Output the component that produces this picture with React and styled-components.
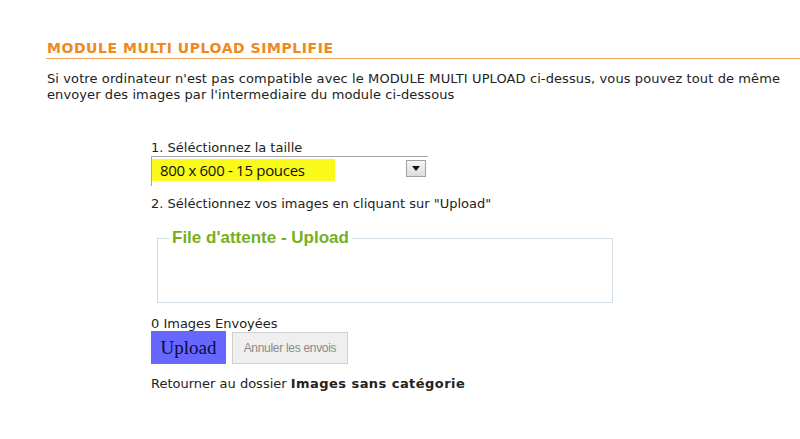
import React from 'react';
import styled, { createGlobalStyle } from 'styled-components';

const GlobalStyle = createGlobalStyle`
  html, body {
    margin: 0;
    padding: 0;
    background: #ffffff;
  }
  body {
    font-family: "DejaVu Sans", Verdana, sans-serif;
    font-size: 13px;
    color: #222;
  }
`;

const Page = styled.div`
  width: 800px;
  height: 439px;
  overflow: hidden;
  padding-top: 41px;
  box-sizing: border-box;
`;

const Title = styled.h2`
  margin: 0 0 0 46px;
  padding: 0 0 2px 1px;
  font-size: 14px;
  font-weight: bold;
  letter-spacing: 0.55px;
  color: #f0891a;
  border-bottom: 1px solid #e9a25c;
  line-height: 15px;
`;

const Intro = styled.p`
  margin: 12px 0 0 47px;
  line-height: 16px;
  letter-spacing: 0.1px;
  color: #222;
  white-space: nowrap;
`;

const Form = styled.div`
  margin: 37px 0 0 151px;
  display: flex;
  flex-direction: column;
`;

const Label = styled.div`
  line-height: 16px;
  color: #222;
`;

const Select = styled.div`
  width: 276px;
  height: 27px;
  padding-top: 2px;
  border-top: 1px solid #a7a7a7;
  border-left: 1px solid #a7a7a7;
  display: flex;
  align-items: flex-start;
  justify-content: space-between;
  margin-bottom: 10px;
`;

const Highlight = styled.span`
  background: #f9f91a;
  padding: 0 30px 0 8px;
  height: 22px;
  font-family: "Open Sans", "Liberation Sans", sans-serif;
  font-size: 15px;
  letter-spacing: -0.3px;
  line-height: 22px;
  color: #111;
`;

const Arrow = styled.span`
  width: 18px;
  height: 15px;
  margin: 1px 2px 0 0;
  border: 1px solid #a0a0a0;
  background: linear-gradient(#f6f6f6, #dcdcdc);
  display: flex;
  align-items: center;
  justify-content: center;
`;

const Queue = styled.fieldset`
  margin: 17px 0 0 6px;
  width: 456px;
  height: 74px;
  padding: 0;
  border: 1px solid #d3dde6;
  box-sizing: border-box;
  legend {
    margin-left: 11px;
    padding: 0 3px;
    font-family: "Liberation Sans", Arial, sans-serif;
    font-size: 17px;
    font-weight: bold;
    color: #77b01c;
    line-height: 18px;
  }
`;

const Count = styled.div`
  margin-top: 13px;
  line-height: 15px;
`;

const Buttons = styled.div`
  display: flex;
  gap: 6px;
  align-items: flex-start;
`;

const UploadButton = styled.div`
  width: 75px;
  height: 33px;
  background: #6767ff;
  color: #0c0c3c;
  font-family: "Liberation Serif", "Times New Roman", serif;
  font-size: 19px;
  display: flex;
  align-items: center;
  justify-content: center;
`;

const CancelButton = styled.div`
  width: 114px;
  height: 30px;
  margin-top: 1px;
  background: #efefef;
  border: 1px solid #cfcfcf;
  color: #8a8a8a;
  font-family: "Liberation Sans", Arial, sans-serif;
  font-size: 12px;
  letter-spacing: -0.3px;
  display: flex;
  align-items: center;
  justify-content: center;
`;

const Back = styled.div`
  margin-top: 12px;
  line-height: 16px;
  b {
    color: #222;
    letter-spacing: 0.45px;
  }
`;

const App = () => (
  <Page>
    <GlobalStyle />
    <Title>MODULE MULTI UPLOAD SIMPLIFIE</Title>
    <Intro>
      Si votre ordinateur n'est pas compatible avec le MODULE MULTI UPLOAD ci-dessus, vous pouvez tout de même
      <br />
      envoyer des images par l'intermediaire du module ci-dessous
    </Intro>
    <Form>
      <Label>1. Séléctionnez la taille</Label>
      <Select>
        <Highlight>800 x 600 - 15 pouces</Highlight>
        <Arrow>
          <svg width="8" height="5" viewBox="0 0 8 5">
            <path d="M0 0 H8 L4 5 Z" fill="#111" />
          </svg>
        </Arrow>
      </Select>
      <Label>2. Séléctionnez vos images en cliquant sur "Upload"</Label>
      <Queue>
        <legend>File d'attente - Upload</legend>
      </Queue>
      <Count>0 Images Envoyées</Count>
      <Buttons>
        <UploadButton>Upload</UploadButton>
        <CancelButton>Annuler les envois</CancelButton>
      </Buttons>
      <Back>
        Retourner au dossier <b>Images sans catégorie</b>
      </Back>
    </Form>
  </Page>
);

export default App;
